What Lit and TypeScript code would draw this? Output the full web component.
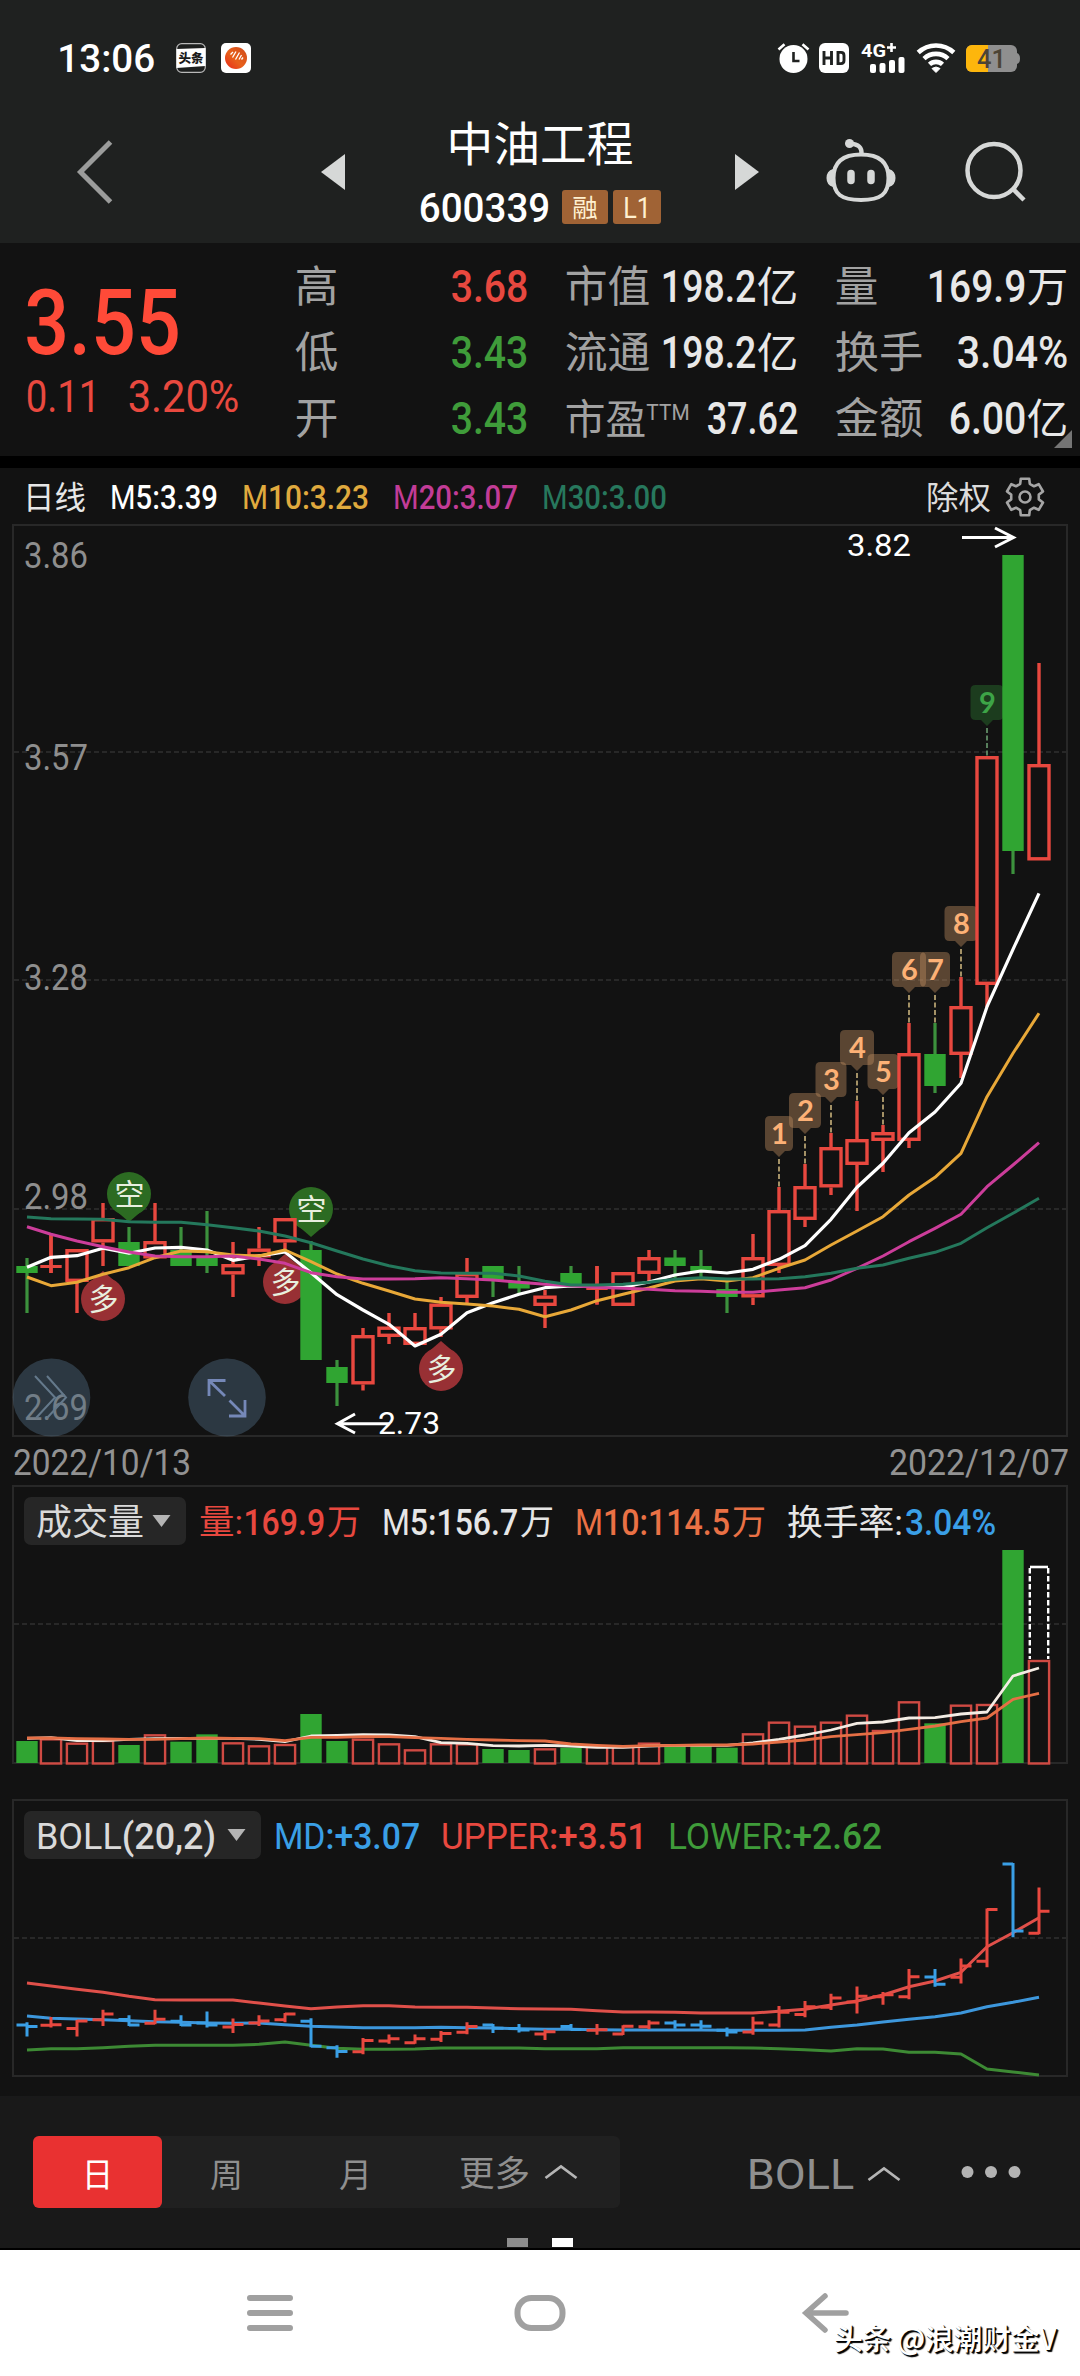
import { LitElement, html, svg, css } from "lit";
import { customElement } from "lit/decorators.js";

const RED = "#e8483f";
const GREEN = "#30a532";
const BLUE = "#3a9fe6";

// Candle: direction, high, body top, body bottom, low (vertical plot coordinates).
type Candle = [string, number, number, number, number];
const candles: Candle[] = [
  ["d", 1258, 1266, 1273, 1313], ["u", 1235, 1265, 1267.5, 1273], ["u", 1249, 1249, 1282, 1313],
  ["u", 1203, 1218, 1242.5, 1266], ["d", 1227, 1242, 1266, 1266], ["u", 1203, 1241, 1258.5, 1258],
  ["d", 1227, 1250, 1266, 1266], ["d", 1211, 1257, 1266, 1273], ["u", 1242, 1264, 1274.5, 1297],
  ["u", 1227, 1248.5, 1257.5, 1266], ["u", 1218, 1218, 1242.5, 1250], ["d", 1241, 1250, 1360, 1360],
  ["d", 1360, 1367, 1383, 1406], ["u", 1328, 1335, 1384.5, 1390.5], ["u", 1313, 1326.5, 1337, 1344],
  ["u", 1313, 1327, 1345, 1345], ["u", 1297, 1303.5, 1329.5, 1337], ["u", 1258, 1273, 1298, 1303],
  ["d", 1266, 1266, 1280, 1297], ["d", 1266, 1281.5, 1288.5, 1295], ["u", 1290, 1295.5, 1306, 1328],
  ["d", 1266, 1273, 1286, 1286], ["u", 1266, 1287, 1289.5, 1304.5], ["u", 1272, 1272, 1306, 1306],
  ["u", 1250, 1257, 1274, 1281], ["d", 1250, 1257.5, 1266, 1278], ["d", 1250, 1266, 1272, 1280],
  ["d", 1281.5, 1289, 1297, 1313], ["u", 1234, 1257, 1297.5, 1305], ["u", 1187, 1210, 1266, 1273],
  ["u", 1164, 1186, 1220, 1227], ["u", 1133, 1147, 1187.5, 1195], ["u", 1101, 1139, 1165, 1211],
  ["u", 1125, 1132, 1141, 1172], ["u", 1023, 1053, 1141, 1148], ["d", 1023, 1054, 1086, 1093],
  ["u", 977, 1006, 1055, 1078], ["u", 756, 756, 985, 1007], ["d", 555, 555, 851, 874],
  ["u", 663, 764, 860.5, 860],
];

const cx = (i: number) => (i === 0 ? 27 : 25 + 26 * i);
const line = (ys: number[], base = 0) =>
  ys.map((y, i) => `${cx(i)},${(base + y / 3).toFixed(1)}`).join(" ");

// Line series are stored in thirds of a pixel above each plot's base line.
const ma5 = [1162, 1132, 1127, 1105, 1120, 1104, 1102, 1110, 1141, 1128, 1116, 1178, 1244, 1290, 1333, 1398, 1363, 1298, 1268, 1243, 1223, 1218, 1220, 1222, 1206, 1185, 1173, 1179, 1168, 1138, 1097, 1018, 922, 850, 758, 696, 610, 380, 208, 40];
const ma10 = [1191, 1217, 1207, 1183, 1163, 1133, 1113, 1115, 1125, 1128, 1110, 1145, 1182, 1210, 1233, 1257, 1267, 1272, 1278, 1288, 1310, 1290, 1262, 1243, 1224, 1203, 1196, 1203, 1193, 1165, 1140, 1095, 1053, 1010, 945, 892, 820, 650, 520, 400];
const ma20 = [1040, 1063, 1083, 1100, 1116, 1128, 1130, 1130, 1128, 1137, 1150, 1178, 1190, 1197, 1197, 1196, 1193, 1196, 1200, 1207, 1213, 1217, 1222, 1225, 1228, 1232, 1234, 1237, 1237, 1230, 1223, 1200, 1165, 1128, 1085, 1045, 1003, 920, 855, 788];
const ma30 = [1011, 1016, 1017, 1018, 1025, 1027, 1027, 1034, 1043, 1053, 1068, 1088, 1113, 1137, 1157, 1172, 1179, 1180, 1180, 1188, 1204, 1215, 1215, 1213, 1207, 1198, 1193, 1197, 1197, 1196, 1190, 1180, 1165, 1155, 1135, 1117, 1090, 1043, 1000, 955];
const volume = [813, 805, 818, 810, 825, 793, 815, 793, 817, 826, 822, 732, 813, 806, 820, 838, 820, 820, 837, 840, 835, 833, 828, 828, 818, 828, 828, 833, 790, 755, 767, 755, 734, 780, 694, 760, 704, 702, 240, 570];
const vol5 = [805, 803, 812, 812, 808, 806, 805, 805, 805, 808, 815, 798, 796, 794, 795, 800, 818, 820, 827, 828, 826, 828, 832, 832, 828, 826, 826, 826, 819, 808, 795, 780, 760, 756, 744, 743, 732, 726, 618, 594];
const vol10 = [804, 804, 806, 807, 808, 808, 806, 804, 805, 806, 812, 802, 802, 800, 800, 803, 805, 808, 810, 812, 813, 822, 826, 829, 827, 826, 825, 825, 822, 816, 810, 800, 794, 788, 778, 768, 755, 744, 688, 670];
const upper = [609, 618, 628, 637, 649, 659, 660, 660, 660, 669, 678, 686, 681, 677, 677, 681, 682, 682, 684, 686, 687, 688, 692, 696, 696, 697, 699, 699, 699, 694, 688, 675, 663, 645, 620, 603, 577, 500, 458, 413];
const middle = [708, 715, 717, 719, 722, 725, 727, 729, 730, 729, 734, 739, 741, 743, 743, 743, 742, 743, 744, 746, 748, 748, 749, 750, 750, 750, 750, 751, 751, 751, 750, 742, 735, 726, 718, 710, 699, 680, 667, 652];
const lower = [810, 806, 806, 803, 799, 796, 796, 796, 796, 793, 786, 796, 805, 808, 808, 807, 804, 804, 804, 804, 806, 806, 806, 803, 803, 803, 803, 803, 804, 806, 809, 813, 806, 807, 817, 817, 822, 867, 876, 885];

// Sequence badges: label, candle index, badge width.
const badges: [string, number, number][] = [
  ["1", 29, 28], ["2", 30, 32], ["3", 31, 31], ["4", 32, 34], ["5", 33, 31],
  ["6", 34, 34], ["7", 35, 30], ["8", 36, 33], ["9", 37, 33],
];

const isCjk = (s: string) => /[\u4e00-\u9fff]/.test(s);

// Text fitted to an exact ink width; capital letters are set in a lighter weight than digits.
// A leading "1" has a wider left bearing than the other digits.
const fit = (text: string, width: number, size: number, cls = "") => {
  const bear = size * 0.03;
  const lead = text.startsWith("1") ? size * 0.07 : bear;
  const parts = text.split(/([A-Z]+)/).filter((p) => p);
  return html`<svg class="fit ${cls}" width=${width} height=${size}>
    <text x=${-lead} y=${size * (isCjk(text) ? 0.88 : 0.855)} font-size=${size}
      textLength=${width + bear + lead} lengthAdjust="spacingAndGlyphs"
      >${parts.map((p) => (/[A-Z]/.test(p) ? svg`<tspan class="caps">${p}</tspan>` : svg`<tspan>${p}</tspan>`))}</text>
  </svg>`;
};

const label = (text: string, x: number, cy: number, width: number, size: number, cls: string) => svg`
  <text class=${cls} x=${x} y=${cy + size * 0.355} font-size=${size} textLength=${width} lengthAdjust="spacingAndGlyphs">${text}</text>`;

const gearPath = (() => {
  const p: string[] = [];
  const at = (deg: number, r: number) => {
    const a = (deg * Math.PI) / 180;
    return `${(21 + r * Math.cos(a)).toFixed(1)} ${(21 + r * Math.sin(a)).toFixed(1)}`;
  };
  for (let k = 0; k < 6; k++) {
    const d = -90 + k * 60;
    p.push(at(d - 20, 14), at(d - 13, 18.8), at(d + 13, 18.8), at(d + 20, 14));
  }
  return `M${p.join("L")}Z`;
})();

@customElement("app-root")
export class AppRoot extends LitElement {
  static styles = css`
    :host { display: block; width: 1080px; height: 2376px; overflow: hidden; background: #121212;
      font-family: Roboto, "Noto Sans CJK SC", sans-serif; color: #e6e6e6; }
    svg { display: block; flex: none; overflow: visible; }
    text { fill: currentColor; font-family: Roboto, "Noto Sans CJK SC", sans-serif; font-weight: 500; white-space: pre; }
    .caps, .thin text { font-weight: 400; }
    .cjk text, .cjk tspan { font-weight: 400; }
    .dark { background: #1f2120; }
    .status { display: flex; height: 101px; box-sizing: border-box; padding: 15px 60px 0; align-items: center; color: #fff; }
    .status .push { margin-left: auto; }
    .g9 { margin-right: 9px; } .g12 { margin-right: 12px; } .g11 { margin-right: 11px; }
    .g22 { margin-right: 22px; } .g15 { margin-right: 15px; }
    .badge { fill: #1b1b1b; font-weight: 900; }
    .net { font-weight: 700; }
    .charge { fill: #4c4435; }
    .nav { display: grid; grid-template-columns: 321px 24px 390px 24px 61px 75px 1fr; height: 142px; box-sizing: border-box;
      align-items: center; }
    .nav .back { margin-left: 74px; }
    .title { display: flex; flex-direction: column; align-items: center; gap: 23px; color: #fff; }
    .code { display: flex; align-items: center; height: 34px; }
    .tag { display: flex; align-items: center; justify-content: center; height: 34px; border-radius: 3px;
      background: #a06335; color: #fff0cf; width: 46px; margin-left: 13px; }
    .tag.l1 { width: 48px; margin-left: 5px; }
    .quote { display: grid; grid-template-columns: 269px 231px 231px 231px; height: 213px; box-sizing: border-box;
      padding-left: 27px; position: relative; }
    .price { padding-top: 33px; display: flex; flex-direction: column; gap: 7px; color: #ff4a38; }
    .change { display: flex; gap: 30px; color: #e9493f; }
    .change text { font-weight: 400; }
    .facts { display: grid; grid-template-rows: repeat(3, 66px); padding-top: 10px; }
    .facts + .facts { margin-left: 39px; width: 231px; }
    .facts:last-of-type { margin-left: 78px; }
    .fact { display: flex; align-items: center; justify-content: space-between; }
    .val { display: flex; align-items: center; gap: 3px; color: #e8e8e8; }
    .lab { display: flex; align-items: center; color: #a2a2a2; }
    .ttm { margin: 0 0 13px 2px; }
    .red, .val.red { color: #e8483f; } .green, .val.green { color: #3f9c3a; }
    .corner { position: absolute; right: 8px; bottom: 8px; }
    .rule { height: 12px; background: #000; }
    .legend { display: flex; align-items: center; gap: 26px; height: 56px; padding: 2px 36px 0 24px; box-sizing: border-box; }
    .legend .tools { display: flex; align-items: center; gap: 14px; margin-left: auto; margin-right: -2px; color: #dcdcdc; }
    .m5 { color: #fff; } .m10 { color: #e0aa3e; } .m20 { color: #c23c97; } .m30 { color: #27785d; }
    text.axis { color: #8e8e8e; font-weight: 400; }
    text.mark { color: #fff; font-weight: 400; }
    .seq { fill: #fdb176; font-family: Lato, sans-serif; font-weight: 700; }
    .seq.last { fill: #3da447; }
    .pin { fill: #e8efdf; font-family: "Noto Sans CJK SC", sans-serif; font-weight: 400; }
    .dates { display: flex; justify-content: space-between; align-items: center; height: 47px; padding: 0 12px 0 14px; color: #929292; }
    .dates text { font-weight: 400; }
    .panel { display: grid; }
    .panel > * { grid-area: 1 / 1; }
    .head { display: flex; align-items: center; align-self: start; height: 48px; margin: 12px 0 0 24px; z-index: 1; }
    .pill { display: flex; align-items: center; justify-content: space-between; height: 48px; box-sizing: border-box;
      padding: 0 15px 0 13px; border-radius: 7px; background: #262626; color: #dadada; }
    .pill.vol { width: 162px; margin-right: 14px; } .pill.boll { width: 237px; margin-right: 14px; }
    .grp { display: flex; align-items: center; gap: 4px; margin-right: 23px; }
    .orange { color: #ea7145; } .sky { color: #3a9fe6; }
    .toolbar { height: 154px; box-sizing: border-box; padding-top: 40px; background: #191919; border-bottom: 2px solid #000; }
    .tools-row { display: flex; align-items: center; height: 72px; padding-left: 33px; color: #8f8f8f; }
    .tabs { display: flex; width: 587px; height: 72px; background: #202020; border-radius: 6px; align-items: center; }
    .tab { display: flex; justify-content: center; align-items: center; width: 129px; height: 72px; padding-top: 4px; box-sizing: border-box; }
    .tab.on { background: #e93131; color: #fff; border-radius: 6px; }
    .more { display: flex; align-items: center; gap: 15px; margin-left: 40px; }
    .ind { display: flex; align-items: center; gap: 14px; margin: 4px 60px 0 128px; }
    .pager { display: flex; justify-content: center; gap: 24px; margin-top: 30px; }
    .dot { width: 21px; height: 9px; background: #8d8d8d; }
    .dot.on { background: #fff; }
    .sysnav { position: relative; height: 126px; background: #fff; }
    .mark-by { position: absolute; right: 24px; top: 67px; font: 500 29px/40px "Noto Sans CJK SC", sans-serif; letter-spacing: -0.4px;
      color: #fff; text-shadow: 2px 2px 1px #000, 1px 1px 0 #111; white-space: nowrap; }
  `;

  private frame(top: number, bottom: number, grids: number[]) {
    return svg`
      <rect x="13" y=${top} width="1054" height=${bottom - top} fill="none" stroke="#282828" stroke-width="2"/>
      ${grids.map((y) => svg`<line x1="14" x2="1066" y1=${y} y2=${y} stroke="#303030" stroke-width="1.6" stroke-dasharray="5 3"/>`)}`;
  }

  private candle([dir, hi, top, bot, lo]: Candle, i: number) {
    const x = cx(i);
    if (dir === "d")
      return svg`<rect x=${x - 1.6} y=${hi} width="3.2" height=${lo - hi} fill="#3c913d"/>
        <rect x=${x - 10.7} y=${top} width="21.4" height=${bot - top} fill=${GREEN}/>`;
    const body = bot - top < 4
      ? svg`<rect x=${x - 10.7} y=${top} width="21.4" height="3" fill=${RED}/>`
      : svg`<rect x=${x - 10} y=${top + 1.7} width="20" height=${bot - top - 3.4} fill="none" stroke=${RED} stroke-width="3.4"/>`;
    return svg`
      <path d="M${x} ${hi}V${top}M${x} ${bot}V${Math.max(bot, lo)}" stroke=${RED} stroke-width="3.4"/>
      ${bot - top < 4 ? svg`<path d="M${x} ${hi}V${lo}" stroke=${RED} stroke-width="3.4"/>` : ""}${body}`;
  }

  private pin(x: number, y: number, text: string, fill: string, up: boolean) {
    const s = up ? -1 : 1;
    return svg`<circle cx=${x} cy=${y} r="22" fill=${fill}/>
      <path d="M${x - 15} ${y + s * 15}L${x} ${y + s * 28}L${x + 15} ${y + s * 15}Z" fill=${fill}/>
      <text class="pin" x=${x + 0.5} y=${y + 11} font-size="30" text-anchor="middle">${text}</text>`;
  }

  private badge([text, i, w]: [string, number, number]) {
    const x = cx(i);
    const y = candles[i][1] - 71;
    const last = text === "9";
    return svg`
      <path d="M${x - w / 2 + 5} ${y}h${w - 10}q5 0 5 5v25q0 5 -5 5h${-(w / 2 - 11)}l-6 6l-6 -6h${-(w / 2 - 11)}q-5 0 -5 -5v-25q0 -5 5 -5z"
        fill=${last ? "rgba(44,130,50,.38)" : "rgba(190,140,95,.42)"}/>
      <line x1=${x} x2=${x} y1=${y + 43} y2=${y + 71} stroke=${last ? "#6a9c70" : "#c9b27c"} stroke-width="1.6" stroke-dasharray="5 2.5"/>
      <text class="seq ${last ? "last" : ""}" x=${x + 0.5} y=${y + 28} font-size="29" text-anchor="middle">${text}</text>`;
  }

  private mainChart() {
    return html`<svg width="1080" height="914" viewBox="0 524 1080 914">
      ${this.frame(525, 1436, [752, 980, 1209])}
      ${label("3.86", 24, 554.5, 64, 37, "axis")}
      ${label("3.57", 24, 757, 64, 37, "axis")}
      ${label("3.28", 24, 977, 64, 37, "axis")}
      ${label("2.98", 24, 1196, 64, 37, "axis")}
      ${label("2.69", 24, 1406.5, 64, 37, "axis")}
      ${this.pin(129, 1194, "空", "#2c6b22", false)}
      ${this.pin(311, 1209, "空", "#2c6b22", false)}
      ${this.pin(103, 1299, "多", "#983034", true)}
      ${this.pin(285, 1282, "多", "#983034", true)}
      ${this.pin(441, 1369, "多", "#983034", true)}
      ${badges.map((b) => this.badge(b))}
      ${candles.map((c, i) => this.candle(c, i))}
      <g fill="none" stroke-width="3" stroke-linejoin="round">
        <polyline points=${line(ma5, 880)} stroke="#fff" stroke-width="3.2"/>
        <polyline points=${line(ma10, 880)} stroke="#e8a838"/>
        <polyline points=${line(ma20, 880)} stroke="#cc3d9a"/>
        <polyline points=${line(ma30, 880)} stroke="#24785c"/>
      </g>
      <g fill="none" stroke="#fff" stroke-width="3">
        <path d="M962 537.5H1013M995 528L1013.5 537.5L995 547"/>
        <path d="M389 1423.7H338M355 1414L337.5 1423.7L355 1433"/>
      </g>
      ${label("3.82", 847, 545, 64, 32, "mark")}
      ${label("2.73", 378, 1423, 62, 32, "mark")}
      <ellipse cx="51.5" cy="1397.5" rx="38.8" ry="39" fill="rgba(78,104,126,.45)"/>
      <path d="M35 1376L55 1397.5L36 1418M47 1376L66 1397.5L47 1418" fill="none" stroke="#64798b" stroke-width="2"/>
      <ellipse cx="227" cy="1397.5" rx="38.8" ry="39" fill="rgba(78,104,126,.45)"/>
      <path d="M225.5 1380.5H209V1396M209 1380.5L225 1396M245 1400V1416H229M245 1416L229.5 1400.5" fill="none" stroke="#7588b8" stroke-width="2.8"/>
    </svg>`;
  }

  private volumeChart() {
    return html`<svg width="1080" height="314" viewBox="0 1485 1080 314">
      ${this.frame(1486, 1763, [1624])}
      ${volume.map((v, i) => {
        const y = 1470 + v / 3;
        const x = cx(i);
        return candles[i][0] === "d"
          ? svg`<rect x=${x - 10.7} y=${y} width="21.4" height=${1763 - y} fill=${GREEN}/>`
          : svg`<rect x=${x - 10.1} y=${y + 1} width="20.2" height=${1762.5 - y} fill="none" stroke="#cf4a43" stroke-width="2.4"/>`;
      })}
      <path d="M1030 1567H1048" stroke="#fff" stroke-width="2.6"/>
      <path d="M1029.8 1568V1659M1048.2 1568V1659" stroke="#fff" stroke-width="2.4" stroke-dasharray="5.5 2.5"/>
      <g fill="none" stroke-width="2.8" stroke-linejoin="round">
        <polyline points=${line(vol5, 1470)} stroke="#f3ece4"/>
        <polyline points=${line(vol10, 1470)} stroke="#e56f45"/>
      </g>
    </svg>`;
  }

  private bollChart() {
    const map = (y: number) => 1864 + (y - 555) * 0.2264;
    return html`<svg width="1080" height="297" viewBox="0 1799 1080 297">
      ${this.frame(1800, 2076, [1938])}
      <g fill="none" stroke-width="3" stroke-linejoin="round">
        <polyline points=${line(upper, 1780)} stroke="#e0504a"/>
        <polyline points=${line(middle, 1780)} stroke="#3d97dc"/>
        <polyline points=${line(lower, 1780)} stroke="#3d8a34"/>
        ${candles.map(([dir, hi, top, bot, lo], i) => {
          const x = cx(i);
          const open = map(dir === "d" ? top : bot);
          const close = map(dir === "d" ? bot : top);
          return svg`<path d="M${x} ${map(hi) - 1}V${map(Math.max(lo, bot)) + 1}M${x - 10.5} ${open}H${x}M${x} ${close}H${x + 10.5}" stroke=${dir === "d" ? BLUE : RED}/>`;
        })}
      </g>
    </svg>`;
  }

  private statusBar() {
    return html`<div class="status">
      <span class="g22">${fit("13:06", 94, 39.5)}</span>
      <svg class="g15" width="30" height="30" viewBox="0 0 30 30">
        <rect x="0.7" y="0.7" width="28.6" height="28.6" rx="5" fill="#1d1f1e" stroke="#b9b9b9" stroke-width="1.2"/>
        <path d="M0.5 6L29.5 5V23L0.5 25Z" fill="#fff"/>
        <text class="badge" x="15" y="20" font-size="12.5" text-anchor="middle">头条</text>
      </svg>
      <svg width="30" height="30" viewBox="0 0 30 30">
        <defs><linearGradient id="sun" x1="1" y1="0" x2="0" y2="1"><stop offset="0" stop-color="#cf4a1c"/><stop offset=".55" stop-color="#e8601a"/><stop offset="1" stop-color="#e8271a"/></linearGradient></defs>
        <rect width="30" height="30" rx="5" fill="#fff"/><circle cx="15" cy="15" r="11" fill="url(#sun)"/>
        <path d="M9.500 11.500L12 9M11.500 14.500L15 8.500M14.500 16.500L18.500 9.500M18 16.500L20.500 12M20.500 16.500L22 14.500" stroke="#fff" stroke-width="1.3"/>
      </svg>
      <svg class="push g9" width="33" height="30" viewBox="0 0 33 30">
        <circle cx="16.5" cy="16" r="14" fill="#fff"/><path d="M16.5 9V18H22.5" fill="none" stroke="#1f2120" stroke-width="2.6"/>
        <path d="M1.5 6.5L7.5 1.2M31.5 6.5L25.5 1.2" stroke="#fff" stroke-width="2.6"/>
      </svg>
      <svg class="g12" width="30" height="30" viewBox="0 0 30 30">
        <rect width="30" height="30" rx="6" fill="#fff"/>
        <path d="M5 8V22M12.5 8V22M5 15H12.5M19 9.4H22Q25 9.4 25 12.4V17.6Q25 20.6 22 20.6H19Z" fill="none" stroke="#1f2120" stroke-width="2.9"/>
      </svg>
      <svg class="g12" width="44" height="30" viewBox="0 0 44 30">
        <text class="net" x="0" y="14" font-size="18.5" textLength="25" lengthAdjust="spacingAndGlyphs">4G</text>
        <path d="M26 4.500H35M30.500 0V9" stroke="#fff" stroke-width="2.6"/>
        <g fill="#fff"><rect x="9" y="21" width="6" height="9" rx="2"/><rect x="18.500" y="20" width="6" height="10" rx="2"/><rect x="28" y="17" width="6" height="13" rx="2"/><rect x="37.500" y="14" width="6" height="16" rx="2"/></g>
      </svg>
      <svg class="g11" width="38" height="30" viewBox="0 0 38 30" fill="none" stroke="#fff" stroke-width="4.600">
        <path d="M1.200 9.500A26 26 0 0 1 36.800 9.500M7 15.600A17.500 17.500 0 0 1 31 15.600M12.500 21.400A9.500 9.500 0 0 1 25.500 21.400"/>
        <path d="M15 25.500Q19 22.500 23 25.500L19 29.500Z" fill="#fff" stroke-width="1"/>
      </svg>
      <svg width="54" height="27" viewBox="0 0 54 27">
        <defs><clipPath id="bat"><rect width="51" height="27" rx="6"/></clipPath></defs>
        <g clip-path="url(#bat)"><rect width="51" height="27" fill="#8f8f8f"/><rect width="22" height="27" fill="#fdb60c"/></g>
        <path d="M51 8Q54 9 54 13.5T51 19Z" fill="#8f8f8f"/>
        <text class="charge" x="11" y="22.5" font-size="25" textLength="29" lengthAdjust="spacingAndGlyphs">41</text>
      </svg>
    </div>`;
  }

  private navBar() {
    return html`<div class="nav">
      <svg class="back" width="42" height="66" viewBox="0 0 42 66"><path d="M36.500 3L6.500 33L36.500 63" fill="none" stroke="#9b9c9b" stroke-width="5"/></svg>
      <svg width="24" height="36" viewBox="0 0 24 36"><path d="M24 0V36L0 18Z" fill="#d6d8d7"/></svg>
      <div class="title">
        ${fit("中油工程", 184, 47, "cjk")}
        <div class="code">
          ${fit("600339", 129, 41)}
          <div class="tag">${fit("融", 24, 25, "cjk")}</div>
          <div class="tag l1">${fit("L1", 26, 29, "thin")}</div>
        </div>
      </div>
      <svg width="24" height="36" viewBox="0 0 24 36"><path d="M0 0V36L24 18Z" fill="#d6d8d7"/></svg>
      <span></span>
      <svg width="75" height="68" viewBox="820 137 75 68" fill="none" stroke="#d6d8d7" stroke-width="4">
        <path d="M861 153.500C880 153.500 888.500 162 888.500 177C888.500 193 881 199 861 199C841 199 833.500 193 833.500 177C833.500 162 842 153.500 861 153.500Z"/>
        <path d="M861.500 153C862 145 857 143 850 142.500" stroke-width="4.500"/>
        <circle cx="849.500" cy="142.500" r="4.500" fill="#d6d8d7" stroke="none"/>
        <path d="M833 168Q826.500 170 826.500 177T833 186ZM889 168Q895.500 170 895.500 177T889 186Z" fill="#d6d8d7" stroke="none"/>
        <path d="M851 172.500V179.500M871 172.500V179.500" stroke-width="7.500" stroke-linecap="round"/>
      </svg>
      <svg width="64" height="64" viewBox="895 139 128 64" fill="none" stroke="#d6d8d7" stroke-width="4.500" preserveAspectRatio="xMinYMin slice">
        <circle cx="994" cy="169.500" r="26.500"/><path d="M1013 188L1024 199"/>
      </svg>
    </div>`;
  }

  private fact(lab: unknown, value: unknown, cls = "") {
    return html`<div class="fact"><div class="lab">${lab}</div><div class="val ${cls}">${value}</div></div>`;
  }

  private quote() {
    const l = (t: string, w: number, s = 43.5) => fit(t, w, s, "cjk");
    const u = (t: string) => fit(t, 39, 42, "cjk");
    return html`<div class="quote">
      <div class="price">
        ${fit("3.55", 151, 91)}
        <div class="change">${fit("0.11", 72, 45)}${fit("3.20%", 109, 45)}</div>
      </div>
      <div class="facts">
        ${this.fact(l("高", 41), fit("3.68", 75, 45), "red")}
        ${this.fact(l("低", 41), fit("3.43", 75, 45), "green")}
        ${this.fact(l("开", 41), fit("3.43", 75, 45), "green")}
      </div>
      <div class="facts">
        ${this.fact(l("市值", 83), html`${fit("198.2", 91, 45)}${u("亿")}`)}
        ${this.fact(l("流通", 83), html`${fit("198.2", 91, 45)}${u("亿")}`)}
        ${this.fact(html`${l("市盈", 79, 41)}<span class="ttm">${fit("TTM", 42, 22, "thin")}</span>`, fit("37.62", 89, 45))}
      </div>
      <div class="facts">
        ${this.fact(l("量", 41), html`${fit("169.9", 95, 45)}${u("万")}`)}
        ${this.fact(l("换手", 86), fit("3.04%", 109, 45))}
        ${this.fact(l("金额", 86), html`${fit("6.00", 75, 45)}${u("亿")}`)}
      </div>
      <svg class="corner" width="18" height="18"><path d="M18 0V18H0Z" fill="#757575"/></svg>
    </div>`;
  }

  private arrow(w = 19) {
    return html`<svg width=${w} height="12" viewBox="0 0 19 12"><path d="M0.500 0H18.500L9.500 12Z" fill="#b4b4b4"/></svg>`;
  }

  private chevron() {
    return html`<svg width="34" height="16" viewBox="0 0 34 16"><path d="M1.500 14L17 2.500L32.500 14" fill="none" stroke="#b5b5b5" stroke-width="2.800"/></svg>`;
  }

  render() {
    return html`
      <div class="dark">${this.statusBar()}${this.navBar()}</div>
      ${this.quote()}
      <div class="rule"></div>
      <div class="legend">
        ${fit("日线", 61, 31.5, "cjk")}
        ${fit("M5:3.39", 106, 33, "m5")}
        ${fit("M10:3.23", 125, 33, "m10")}
        ${fit("M20:3.07", 123, 33, "m20")}
        ${fit("M30:3.00", 123, 33, "m30")}
        <div class="tools">
          ${fit("除权", 63, 32, "cjk")}
          <svg width="42" height="42" viewBox="0 0 42 42" fill="none" stroke="#a5a5a5" stroke-width="2.600" stroke-linejoin="round">
            <path d=${gearPath}/><circle cx="21" cy="21" r="5.500"/>
          </svg>
        </div>
      </div>
      ${this.mainChart()}
      <div class="dates">${fit("2022/10/13", 176, 36)}${fit("2022/12/07", 178, 36)}</div>
      <div class="panel">
        ${this.volumeChart()}
        <div class="head">
          <div class="pill vol">${fit("成交量", 106, 36, "cjk")}${this.arrow()}</div>
          <div class="grp red">${fit("量:", 42, 34, "cjk")}${fit("169.9", 78, 37)}${fit("万", 32, 34, "cjk")}</div>
          <div class="grp">${fit("M5:156.7", 134, 37)}${fit("万", 32, 34, "cjk")}</div>
          <div class="grp orange">${fit("M10:114.5", 153, 37)}${fit("万", 32, 34, "cjk")}</div>
          <div class="grp">${fit("换手率:", 114, 35, "cjk")}<span class="sky">${fit("3.04%", 89, 37)}</span></div>
        </div>
      </div>
      <div class="panel">
        ${this.bollChart()}
        <div class="head">
          <div class="pill boll">${fit("BOLL(20,2)", 178, 37)}${this.arrow()}</div>
          <div class="grp sky">${fit("MD:+3.07", 144, 37)}</div>
          <div class="grp red">${fit("UPPER:+3.51", 204, 37)}</div>
          <div class="grp green">${fit("LOWER:+2.62", 212, 37)}</div>
        </div>
      </div>
      <div class="toolbar">
        <div class="tools-row">
          <div class="tabs">
            <div class="tab on">${fit("日", 29, 34, "cjk")}</div>
            <div class="tab">${fit("周", 31, 33, "cjk")}</div>
            <div class="tab">${fit("月", 31, 33, "cjk")}</div>
            <div class="more">${fit("更多", 69, 35, "cjk")}${this.chevron()}</div>
          </div>
          <div class="ind">${fit("BOLL", 105, 42)}${this.chevron()}</div>
          <svg width="60" height="14" viewBox="0 0 60 14" fill="#b3b3b3"><circle cx="6.500" cy="7" r="6"/><circle cx="30" cy="7" r="6"/><circle cx="53.500" cy="7" r="6"/></svg>
        </div>
        <div class="pager"><div class="dot"></div><div class="dot on"></div></div>
      </div>
      <div class="sysnav">
        <svg width="1080" height="126" viewBox="0 2250 1080 126" fill="none" stroke="#a0a0a0" stroke-width="6">
          <path d="M250 2298H290M250 2313H290M250 2328H290" stroke-linecap="round"/>
          <rect x="517.500" y="2298" width="45" height="30" rx="14"/>
          <path d="M808 2313H846M825 2296L806 2313L825 2330" stroke-linecap="round" stroke-width="5.500"/>
        </svg>
        <div class="mark-by">头条 @浪潮财金V</div>
      </div>`;
  }
}
